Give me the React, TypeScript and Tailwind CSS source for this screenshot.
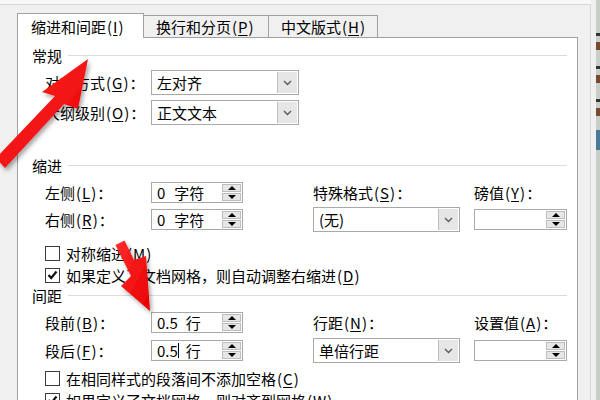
import React from 'react';

const Key = ({ k }: { k: string }) => (
  <>
    <span className="mx-[1px]">(</span>
    <span className="underline underline-offset-[2px]">{k}</span>
    <span className="mx-[1px]">)</span>
  </>
);

function Label({ text, k, colon = true }: { text: string; k: string; colon?: boolean }) {
  return (
    <span className="whitespace-nowrap">
      {text}
      <Key k={k} />
      {colon ? '：' : ''}
    </span>
  );
}

function SpinBox({ children, w = 'w-[92px]' }: { children?: React.ReactNode; w?: string }) {
  return (
    <div className={`flex h-[21px] ${w} border border-[#a9a9a9] bg-white`}>
      <div className="flex flex-1 items-center pl-[5px]">{children}</div>
      <div className="flex w-[20px] flex-col gap-px py-px pr-px">
        <div className="flex flex-1 items-center justify-center border border-[#bdbdbd] bg-[#e6e6e6]">
          <div className="h-0 w-0 border-x-[4px] border-b-[4px] border-x-transparent border-b-black" />
        </div>
        <div className="flex flex-1 items-center justify-center border border-[#bdbdbd] bg-[#e6e6e6]">
          <div className="h-0 w-0 border-x-[4px] border-t-[4px] border-x-transparent border-t-black" />
        </div>
      </div>
    </div>
  );
}

function Select({ value, w }: { value: string; w: string }) {
  return (
    <div className={`flex h-[25px] ${w} shrink-0 border border-[#a9a9a9] bg-white`}>
      <div className="flex flex-1 items-center pl-[5px]">{value}</div>
      <div className="my-px mr-px flex w-[20px] items-center justify-center border-l border-[#bdbdbd] bg-[#e6e6e6]">
        <svg width="9" height="6" viewBox="0 0 9 6">
          <path d="M1 1 L4.5 4.5 L8 1" fill="none" stroke="#5a5a5a" strokeWidth="1.4" />
        </svg>
      </div>
    </div>
  );
}

function Check({ checked, children, className = '' }: { checked?: boolean; children: React.ReactNode; className?: string }) {
  return (
    <div className={`flex h-[16px] items-center pl-[27px] ${className}`}>
      <div className="flex h-[15px] w-[15px] items-center justify-center border border-[#3c3c3c] bg-white">
        {checked && (
          <svg width="11" height="10" viewBox="0 0 11 10">
            <path d="M1.5 5 L4.2 8 L9.5 1.5" fill="none" stroke="#111" strokeWidth="2.2" />
          </svg>
        )}
      </div>
      <span className="ml-[6px] whitespace-nowrap">{children}</span>
    </div>
  );
}

function Section({ title, className }: { title: string; className: string }) {
  return (
    <div className={`flex h-[16px] items-center pl-[14px] pr-[10px] ${className}`}>
      <span>{title}</span>
      <div className="ml-[6px] h-px flex-1 bg-[#dcdcdc]" />
    </div>
  );
}

function Arrows() {
  return (
    <svg className="pointer-events-none absolute left-0 top-0" width="600" height="400" viewBox="0 0 600 400">
      <defs>
        <linearGradient id="red" x1="0" y1="0" x2="1" y2="1">
          <stop offset="0" stopColor="#ff2b2b" />
          <stop offset="1" stopColor="#e80000" />
        </linearGradient>
        <filter id="shadow" x="-20%" y="-20%" width="140%" height="140%">
          <feDropShadow dx="2" dy="3" stdDeviation="2" floodColor="#000" floodOpacity="0.35" />
        </filter>
      </defs>
      <polygon
        points="-4,158 55,96 42,92 88,59 78,109 64,104 5,168"
        fill="url(#red)"
        filter="url(#shadow)"
      />
      <polygon
        points="115.5,245 124.5,240.5 134,260 146,256 150,311 121,286 131,276"
        fill="url(#red)"
        filter="url(#shadow)"
      />
    </svg>
  );
}

export default function App() {
  return (
    <div className="relative flex h-[400px] w-[600px] overflow-hidden bg-[#f8f8f8] font-['Noto_Sans_CJK_SC','Noto_Sans',sans-serif] text-[15px] leading-[17px] text-black">
      {/* dialog */}
      <div className="mt-[4px] flex w-[591px] flex-col border-r border-t border-[#d6d6d6] bg-[#f0f0f0] pl-[17px] pr-[12px] pt-[8px]">
        {/* tabs */}
        <div className="flex h-[24px] items-end">
          <div className="relative z-10 -mb-px flex h-[25px] w-[127px] items-center border-x border-t border-[#a0a0a0] bg-white pl-[13px]">
            <Label text="缩进和间距" k="I" colon={false} />
          </div>
          <div className="flex h-[22px] w-[125px] items-center border-r border-t border-[#a0a0a0] bg-[#f0f0f0] pl-[12px]">
            <Label text="换行和分页" k="P" colon={false} />
          </div>
          <div className="flex h-[22px] w-[109px] items-center border-r border-t border-[#a0a0a0] bg-[#f0f0f0] pl-[12px]">
            <Label text="中文版式" k="H" colon={false} />
          </div>
        </div>

        {/* panel */}
        <div className="flex flex-1 flex-col border-x border-t border-[#a0a0a0] bg-white">
          <Section title="常规" className="mt-[9px]" />

          <div className="mt-[7px] flex h-[25px] items-center pl-[27px]">
            <div className="w-[106px]">
              <Label text="对齐方式" k="G" />
            </div>
            <Select value="左对齐" w="w-[148px]" />
          </div>
          <div className="mt-[5px] flex h-[25px] items-center pl-[27px]">
            <div className="w-[106px]">
              <Label text="大纲级别" k="O" />
            </div>
            <Select value="正文文本" w="w-[148px]" />
          </div>

          <Section title="缩进" className="mt-[32px]" />

          <div className="mt-[9px] flex h-[21px] items-center pl-[27px]">
            <div className="w-[106px]">
              <Label text="左侧" k="L" />
            </div>
            <SpinBox>
              <span>0</span>
              <span className="ml-[9px]">字符</span>
            </SpinBox>
            <div className="w-[70px]" />
            <div className="w-[161px]">
              <Label text="特殊格式" k="S" />
            </div>
            <Label text="磅值" k="Y" />
          </div>
          <div className="mt-[6px] flex h-[21px] items-center pl-[27px]">
            <div className="w-[106px]">
              <Label text="右侧" k="R" />
            </div>
            <SpinBox>
              <span>0</span>
              <span className="ml-[9px]">字符</span>
            </SpinBox>
            <div className="w-[70px]" />
            <Select value="(无)" w="w-[147px]" />
            <div className="w-[14px]" />
            <SpinBox w="w-[93px]" />
          </div>

          <Check className="mt-[15px]">
            对称缩进
            <Key k="M" />
          </Check>
          <Check checked className="mt-[6px]">
            如果定义了文档网格，则自动调整右缩进
            <Key k="D" />
          </Check>

          <Section title="间距" className="mt-[4px]" />

          <div className="mt-[9px] flex h-[21px] items-center pl-[27px]">
            <div className="w-[106px]">
              <Label text="段前" k="B" />
            </div>
            <SpinBox>
              <span>0.5</span>
              <span className="ml-[8px]">行</span>
            </SpinBox>
            <div className="w-[70px]" />
            <div className="w-[161px]">
              <Label text="行距" k="N" />
            </div>
            <Label text="设置值" k="A" />
          </div>
          <div className="mt-[7px] flex h-[21px] items-center pl-[27px]">
            <div className="w-[106px]">
              <Label text="段后" k="F" />
            </div>
            <SpinBox>
              <span>0.5</span>
              <span className="h-[15px] w-px bg-black" />
              <span className="ml-[7px]">行</span>
            </SpinBox>
            <div className="w-[70px]" />
            <Select value="单倍行距" w="w-[147px]" />
            <div className="w-[14px]" />
            <SpinBox w="w-[93px]" />
          </div>

          <Check className="mt-[9px]">
            在相同样式的段落间不添加空格
            <Key k="C" />
          </Check>
          <Check checked className="mt-[6px]">
            如果定义了文档网格，则对齐到网格
            <Key k="W" />
          </Check>
        </div>
      </div>

      {/* background window edge */}
      <div className="w-[5px] bg-[#f0f0f0]" />
      <div className="flex w-[4px] flex-col bg-[#c7cec7] pt-[33px]">
        <div className="h-[3px] bg-[#333]" />
        <div className="mt-[6px] h-[8px] bg-[#7a4a2a]" />
        <div className="mt-[16px] h-[3px] bg-[#333]" />
        <div className="mt-[6px] h-[8px] bg-[#7a4a2a]" />
        <div className="mt-[16px] h-[3px] bg-[#333]" />
        <div className="mt-[6px] h-[8px] bg-[#7a4a2a]" />
        <div className="mt-[14px] h-[20px] bg-[#4a7a9a]" />
      </div>

      <Arrows />
    </div>
  );
}
